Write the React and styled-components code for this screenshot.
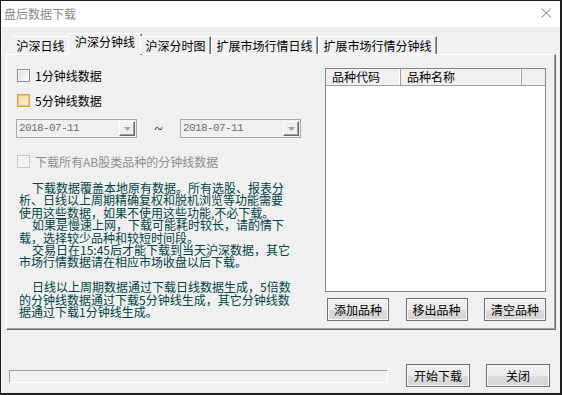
import React from 'react';
import styled, { createGlobalStyle } from 'styled-components';

const GlobalStyle = createGlobalStyle`
  html, body {
    margin: 0;
    padding: 0;
    background: #1c211c;
  }
  body {
    font-family: "Noto Sans CJK SC", "Liberation Sans", sans-serif;
    font-size: 12px;
    color: #000;
  }
`;

const tabs = ['沪深日线', '沪深分钟线', '沪深分时图', '扩展市场行情日线', '扩展市场行情分钟线'];

const noteLines = [
  { text: '下载数据覆盖本地原有数据。所有选股、报表分', indent: true },
  { text: '析、日线以上周期精确复权和脱机浏览等功能需要' },
  { text: '使用这些数据，如果不使用这些功能,不必下载。' },
  { text: '如果是慢速上网，下载可能耗时较长，请酌情下', indent: true },
  { text: '载，选择较少品种和较短时间段。' },
  { text: '交易日在15:45后才能下载到当天沪深数据，其它', indent: true },
  { text: '市场行情数据请在相应市场收盘以后下载。' },
  { text: '' },
  { text: '日线以上周期数据通过下载日线数据生成，5倍数', indent: true },
  { text: '的分钟线数据通过下载5分钟线生成，其它分钟线数' },
  { text: '据通过下载1分钟线生成。' },
];

const DropArrow = () => (
  <svg width="7" height="4" viewBox="0 0 7 4">
    <path d="M0 0 L7 0 L3.5 4 Z" fill="#a3a3a3" />
  </svg>
);

const App = () => {
  return (
    <>
      <GlobalStyle />
      <Window>
        <TitleBar>
          <Title>盘后数据下载</Title>
          <CloseIcon width="11" height="10" viewBox="0 0 11 10">
            <path d="M0.5 0.5 L10 9.5 M10 0.5 L0.5 9.5" stroke="#7a7a7a" strokeWidth="1" fill="none" />
          </CloseIcon>
        </TitleBar>

        <Content>
          <TabStrip>
            {tabs.map((t) => (
              <Tab key={t} active={t === '沪深分钟线'}>
                {t}
              </Tab>
            ))}
          </TabStrip>

          <Panel>
            <LeftCol>
              <CheckRow>
                <CheckBox />
                <CheckLabel>1分钟线数据</CheckLabel>
              </CheckRow>
              <CheckRow>
                <CheckBox hot />
                <CheckLabel>5分钟线数据</CheckLabel>
              </CheckRow>

              <DateRow>
                <Combo>
                  <ComboText>2018-07-11</ComboText>
                  <DropButton>
                    <DropArrow />
                  </DropButton>
                </Combo>
                <Tilde>~</Tilde>
                <Combo>
                  <ComboText>2018-07-11</ComboText>
                  <DropButton>
                    <DropArrow />
                  </DropButton>
                </Combo>
              </DateRow>

              <CheckRow spaced>
                <CheckBox disabled />
                <CheckLabel disabled>下载所有AB股类品种的分钟线数据</CheckLabel>
              </CheckRow>

              <Note>
                {noteLines.map((l, i) => (
                  <NoteLine key={i} indent={l.indent}>
                    {l.text || '\u00a0'}
                  </NoteLine>
                ))}
              </Note>
            </LeftCol>

            <RightCol>
              <ListBox>
                <ListHeader>
                  <HeaderCell width={75}>品种代码</HeaderCell>
                  <HeaderCell width={121}>品种名称</HeaderCell>
                  <HeaderCell />
                </ListHeader>
              </ListBox>
              <ButtonRow>
                <Button>添加品种</Button>
                <Button>移出品种</Button>
                <Button>清空品种</Button>
              </ButtonRow>
            </RightCol>
          </Panel>
        </Content>

        <Footer>
          <Progress />
          <Button width={64}>开始下载</Button>
          <Button width={64}>关闭</Button>
        </Footer>
      </Window>
    </>
  );
};

export default App;

const Window = styled.div`
  width: 559px;
  height: 392px;
  margin: 1px 0 0 1px;
  background: #f0f0f0;
  display: flex;
  flex-direction: column;
`;

const TitleBar = styled.div`
  height: 26px;
  background: #fff;
  display: flex;
  align-items: center;
  justify-content: space-between;
  padding: 0 8px 0 3px;
`;

const Title = styled.span`
  font-size: 12px;
  line-height: 14px;
  color: #8a8a8a;
  margin-top: -1px;
`;

const CloseIcon = styled.svg`
  display: block;
  margin-top: -3px;
`;

const Content = styled.div`
  padding: 6px 4px 0 5px;
`;

const TabStrip = styled.div`
  display: flex;
  align-items: flex-end;
  height: 21px;
  padding-left: 5px;
  position: relative;
  z-index: 1;
`;

const Tab = styled.div`
  height: ${(p) => (p.active ? '22px' : '18px')};
  margin: ${(p) => (p.active ? '0 -2px -1px' : '0')};
  padding: ${(p) => (p.active ? '0 6px' : '0 4.5px')};
  background: #f0f0f0;
  border-left: 1px solid #fff;
  border-top: 1px solid #fff;
  border-right: 1px solid #696969;
  box-shadow: inset -1px 0 0 #a0a0a0;
  font-size: 12px;
  line-height: ${(p) => (p.active ? '16px' : '17px')};
  white-space: nowrap;
  box-sizing: border-box;
  &:first-child {
    border-left-color: #f0f0f0;
  }
`;

const Panel = styled.div`
  height: 276px;
  box-sizing: border-box;
  border-top: 1px solid #fff;
  border-left: 1px solid #fff;
  border-right: 1px solid #696969;
  border-bottom: 1px solid #696969;
  box-shadow: inset -1px -1px 0 #a0a0a0;
  display: grid;
  grid-template-columns: 1fr 221px;
  padding: 13px 9px 0 9px;
`;

const LeftCol = styled.div`
  display: flex;
  flex-direction: column;
  padding-top: 1px;
`;

const RightCol = styled.div`
  display: flex;
  flex-direction: column;
`;

const CheckRow = styled.div`
  display: flex;
  align-items: center;
  height: 13px;
  margin-left: 1px;
  margin-top: ${(p) => (p.spaced ? '17px' : '0')};
  margin-bottom: ${(p) => (p.spaced ? '14px' : '12px')};
`;

const CheckBox = styled.span`
  width: 13px;
  height: 13px;
  box-sizing: border-box;
  flex: none;
  border: 1px solid ${(p) => (p.disabled ? '#c8c8c8' : p.hot ? '#d3a24c' : '#8e8f8f')};
  background: ${(p) =>
    p.disabled
      ? '#f2f2f2'
      : p.hot
      ? 'linear-gradient(135deg, #fbd89b 0%, #f9e6c2 55%, #fdf4e2 100%)'
      : 'linear-gradient(135deg, #dcdcdc 0%, #f0f0f0 55%, #fcfcfc 100%)'};
  box-shadow: inset 0 0 0 1px ${(p) => (p.disabled ? '#f4f4f4' : p.hot ? '#f6c46e' : '#f4f4f4')};
`;

const CheckLabel = styled.span`
  margin-left: 5px;
  font-size: 12px;
  line-height: 13px;
  color: ${(p) => (p.disabled ? '#8f8f8f' : '#000')};
  white-space: nowrap;
`;

const DateRow = styled.div`
  display: flex;
  align-items: center;
  height: 19px;
`;

const Combo = styled.div`
  width: 121px;
  height: 19px;
  box-sizing: border-box;
  border: 1px solid #a8a8a8;
  background: #f0f0f0;
  display: flex;
  align-items: center;
  justify-content: space-between;
  padding: 0 1px 0 2px;
`;

const ComboText = styled.span`
  font-family: "Liberation Mono", monospace;
  font-size: 11px;
  letter-spacing: -0.6px;
  color: #6d6d6d;
  line-height: 15px;
`;

const DropButton = styled.span`
  width: 16px;
  height: 15px;
  box-sizing: border-box;
  border-top: 1px solid #fff;
  border-left: 1px solid #fff;
  border-right: 1px solid #696969;
  border-bottom: 1px solid #696969;
  box-shadow: inset -1px -1px 0 #a0a0a0;
  display: flex;
  align-items: center;
  justify-content: center;
  svg {
    display: block;
  }
`;

const Tilde = styled.span`
  width: 43px;
  text-align: center;
  font-family: "Liberation Serif", serif;
  font-size: 15px;
  line-height: 14px;
  color: #000;
`;

const Note = styled.div`
  margin-left: 3px;
  color: #004444;
  font-size: 12px;
`;

const NoteLine = styled.div`
  line-height: 12.4px;
  height: 12.4px;
  white-space: nowrap;
  text-indent: ${(p) => (p.indent ? '13px' : '0')};
`;

const ListBox = styled.div`
  height: 224px;
  box-sizing: border-box;
  border: 1px solid #828790;
  background: #fff;
`;

const ListHeader = styled.div`
  display: flex;
  height: 16px;
  background: #f0f0f0;
  border-bottom: 1px solid #a0a0a0;
`;

const HeaderCell = styled.div`
  width: ${(p) => (p.width ? `${p.width}px` : 'auto')};
  flex: ${(p) => (p.width ? 'none' : '1')};
  box-sizing: border-box;
  padding-left: 6px;
  font-size: 12px;
  line-height: 15px;
  border-right: ${(p) => (p.width ? '1px solid #a0a0a0' : 'none')};
  box-shadow: ${(p) => (p.width ? 'inset -1px 0 0 #fff' : 'none')};
  white-space: nowrap;
`;

const ButtonRow = styled.div`
  display: flex;
  justify-content: space-between;
  margin-top: 6px;
  padding-left: 2px;
`;

const Button = styled.button`
  width: ${(p) => (p.width || 62)}px;
  height: 23px;
  padding: 0;
  box-sizing: border-box;
  border: 1px solid #707070;
  border-radius: 0;
  background: linear-gradient(#f2f2f2 0%, #ebebeb 50%, #dddddd 51%, #d5d5d5 100%);
  box-shadow: inset 0 0 0 1px #f8f8f8;
  font-family: "Noto Sans CJK SC", sans-serif;
  font-size: 12px;
  line-height: 20px;
  color: #000;
`;

const Footer = styled.div`
  flex: 1;
  display: flex;
  align-items: flex-end;
  gap: 16px;
  padding: 0 10px 6px 8px;
`;

const Progress = styled.div`
  width: 379px;
  height: 13px;
  box-sizing: border-box;
  margin-right: 2px;
  margin-bottom: 4px;
  border-top: 1px solid #a0a0a0;
  border-left: 1px solid #a0a0a0;
  border-right: 1px solid #fff;
  border-bottom: 1px solid #fff;
  background: #f0f0f0;
`;
